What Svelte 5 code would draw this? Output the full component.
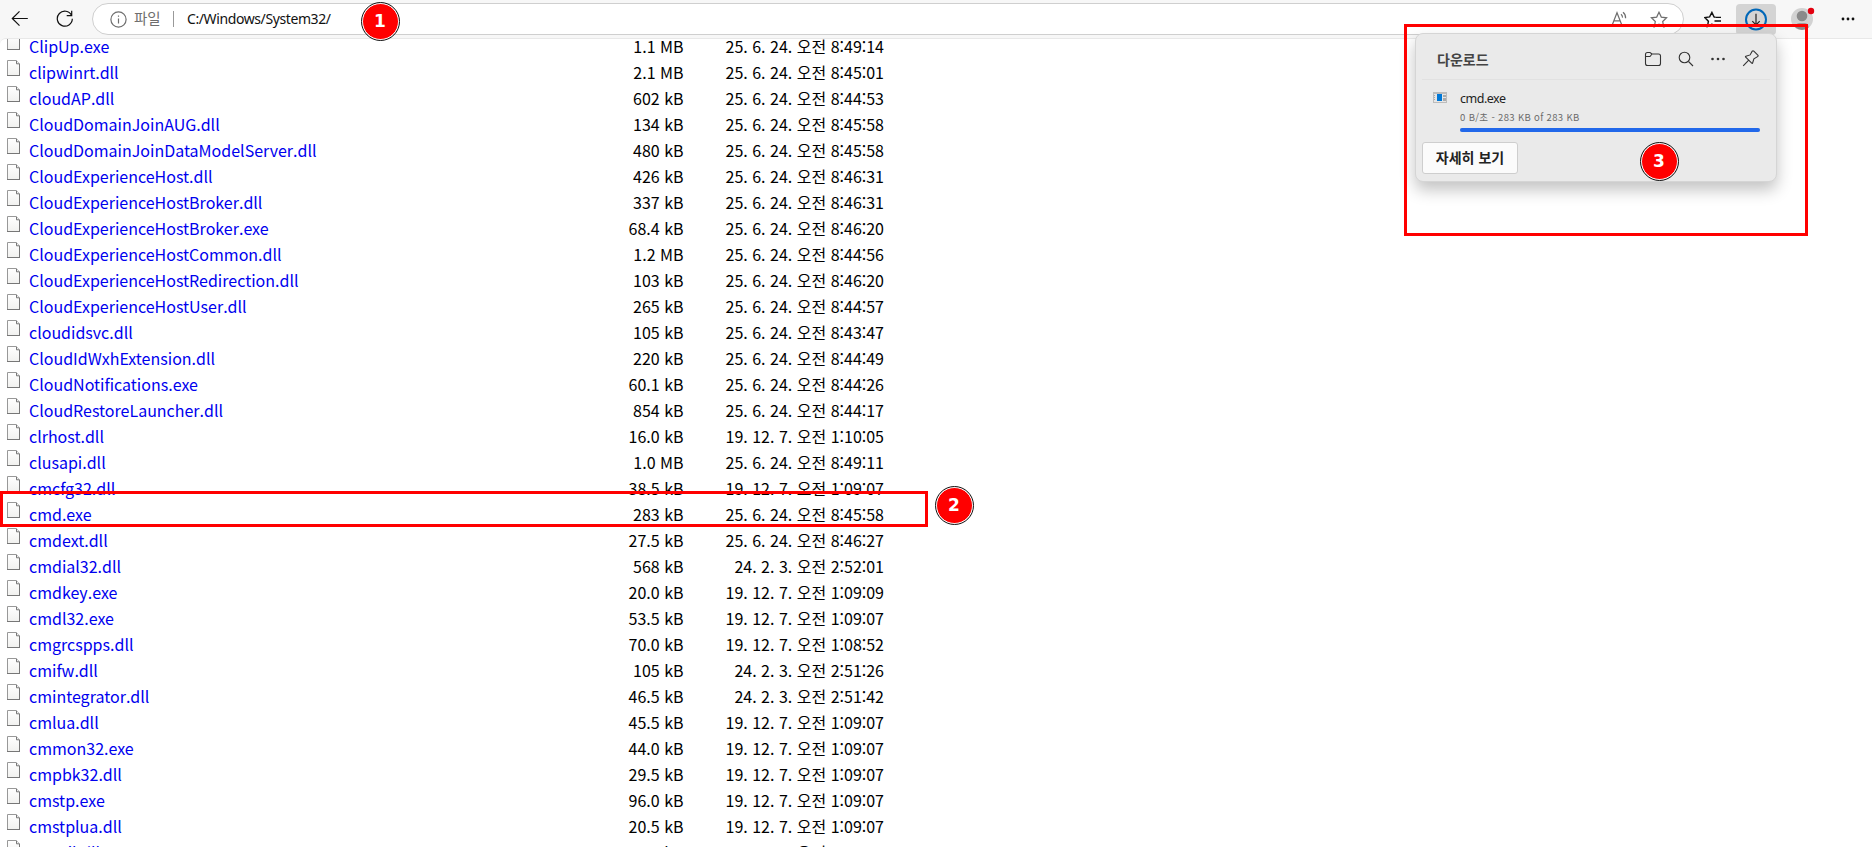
<script lang="ts">
	interface Entry {
		name: string;
		size: string;
		date: string;
	}

	const entries: Entry[] = [
		{ name: 'ClipUp.exe', size: '1.1 MB', date: '25. 6. 24. 오전 8:49:14' },
		{ name: 'clipwinrt.dll', size: '2.1 MB', date: '25. 6. 24. 오전 8:45:01' },
		{ name: 'cloudAP.dll', size: '602 kB', date: '25. 6. 24. 오전 8:44:53' },
		{ name: 'CloudDomainJoinAUG.dll', size: '134 kB', date: '25. 6. 24. 오전 8:45:58' },
		{ name: 'CloudDomainJoinDataModelServer.dll', size: '480 kB', date: '25. 6. 24. 오전 8:45:58' },
		{ name: 'CloudExperienceHost.dll', size: '426 kB', date: '25. 6. 24. 오전 8:46:31' },
		{ name: 'CloudExperienceHostBroker.dll', size: '337 kB', date: '25. 6. 24. 오전 8:46:31' },
		{ name: 'CloudExperienceHostBroker.exe', size: '68.4 kB', date: '25. 6. 24. 오전 8:46:20' },
		{ name: 'CloudExperienceHostCommon.dll', size: '1.2 MB', date: '25. 6. 24. 오전 8:44:56' },
		{ name: 'CloudExperienceHostRedirection.dll', size: '103 kB', date: '25. 6. 24. 오전 8:46:20' },
		{ name: 'CloudExperienceHostUser.dll', size: '265 kB', date: '25. 6. 24. 오전 8:44:57' },
		{ name: 'cloudidsvc.dll', size: '105 kB', date: '25. 6. 24. 오전 8:43:47' },
		{ name: 'CloudIdWxhExtension.dll', size: '220 kB', date: '25. 6. 24. 오전 8:44:49' },
		{ name: 'CloudNotifications.exe', size: '60.1 kB', date: '25. 6. 24. 오전 8:44:26' },
		{ name: 'CloudRestoreLauncher.dll', size: '854 kB', date: '25. 6. 24. 오전 8:44:17' },
		{ name: 'clrhost.dll', size: '16.0 kB', date: '19. 12. 7. 오전 1:10:05' },
		{ name: 'clusapi.dll', size: '1.0 MB', date: '25. 6. 24. 오전 8:49:11' },
		{ name: 'cmcfg32.dll', size: '38.5 kB', date: '19. 12. 7. 오전 1:09:07' },
		{ name: 'cmd.exe', size: '283 kB', date: '25. 6. 24. 오전 8:45:58' },
		{ name: 'cmdext.dll', size: '27.5 kB', date: '25. 6. 24. 오전 8:46:27' },
		{ name: 'cmdial32.dll', size: '568 kB', date: '24. 2. 3. 오전 2:52:01' },
		{ name: 'cmdkey.exe', size: '20.0 kB', date: '19. 12. 7. 오전 1:09:09' },
		{ name: 'cmdl32.exe', size: '53.5 kB', date: '19. 12. 7. 오전 1:09:07' },
		{ name: 'cmgrcspps.dll', size: '70.0 kB', date: '19. 12. 7. 오전 1:08:52' },
		{ name: 'cmifw.dll', size: '105 kB', date: '24. 2. 3. 오전 2:51:26' },
		{ name: 'cmintegrator.dll', size: '46.5 kB', date: '24. 2. 3. 오전 2:51:42' },
		{ name: 'cmlua.dll', size: '45.5 kB', date: '19. 12. 7. 오전 1:09:07' },
		{ name: 'cmmon32.exe', size: '44.0 kB', date: '19. 12. 7. 오전 1:09:07' },
		{ name: 'cmpbk32.dll', size: '29.5 kB', date: '19. 12. 7. 오전 1:09:07' },
		{ name: 'cmstp.exe', size: '96.0 kB', date: '19. 12. 7. 오전 1:09:07' },
		{ name: 'cmstplua.dll', size: '20.5 kB', date: '19. 12. 7. 오전 1:09:07' },
		{ name: 'cmutil.dll', size: '56.5 kB', date: '19. 12. 7. 오전 1:09:07' }
	];

	let progress = $state(100);
</script>

<div class="browser" lang="ko">
	<header class="toolbar">
		<button class="nav back" aria-label="뒤로">
			<svg width="18" height="18" viewBox="0 0 18 18"><path d="M16.800 8.500H1.500M8.500 1.300 1.300 8.500l7.200 7.200" /></svg>
		</button>
		<button class="nav reload" aria-label="새로 고침">
			<svg width="18" height="18" viewBox="0 0 18 18">
				<path d="M15.600 5.500A7.500 7.500 0 1 0 16.300 8.700M15.700 .7v5h-5" />
			</svg>
		</button>
		<div class="address">
			<svg class="info" width="17" height="17" viewBox="0 0 17 17">
				<circle cx="8.500" cy="8.500" r="7.600" />
				<path d="M8.500 7.500v5M8.500 4.400v1.400" />
			</svg>
			<span class="scheme">파일</span>
			<span class="divider"></span>
			<span class="url">C:/Windows/System32/</span>
			<svg class="read" width="17" height="16" viewBox="0 0 17 16">
				<path d="M1.200 14 6 1.700l4.800 12.300M2.900 9.800h6.200M10 3.200q1.600 1.300 1.500 3.400M12 1.200q2.800 2.200 2.600 6" />
			</svg>
			<svg class="star" width="18" height="17" viewBox="0 0 18 17">
				<path d="m9 1.200 2.300 4.900 5.300.7-3.900 3.700 1 5.400L9 13.300l-4.700 2.600 1-5.400L1.400 6.800l5.300-.7z" />
			</svg>
		</div>
		<button class="nav favorites" aria-label="즐겨찾기">
			<svg width="18" height="17" viewBox="0 0 18 17">
				<path d="M11.300 6.200 10 5.900 7.900 1.400 5.600 5.900.9 6.600l3.500 3.600-.9 5.300 5-2.700M11.500 6.400h5.500M10.500 10h6.500M11.500 13.600h5.500" />
			</svg>
		</button>
		<button class="nav downloads" aria-label="다운로드">
			<svg width="24" height="24" viewBox="0 0 24 24">
				<circle cx="12" cy="11.500" r="10" />
				<path d="M12 5.800v11M8.300 13.100l3.700 3.700 3.700-3.700" />
			</svg>
		</button>
		<button class="nav profile" aria-label="프로필">
			<svg width="26" height="26" viewBox="0 0 26 26">
				<circle cx="12" cy="13" r="11" fill="#d2d2d2" />
				<circle cx="12" cy="10" r="5.300" fill="#8a8a8a" />
				<path d="M5.500 21.800v-.8q0-3.800 4-3.800h5q4 0 4 3.800v.8a11 11 0 0 1-13 0z" fill="#8a8a8a" />
				<circle cx="21" cy="5" r="3.200" fill="#e3000f" />
			</svg>
		</button>
		<button class="nav more" aria-label="설정 및 기타">
			<svg width="14" height="4" viewBox="0 0 14 4">
				<circle cx="2" cy="2" r="1.400" /><circle cx="7" cy="2" r="1.400" /><circle cx="12" cy="2" r="1.400" />
			</svg>
		</button>
	</header>

	<main class="page">
		<div class="listing">
			{#each entries as entry (entry.name)}
				<div class="row">
					<svg class="file" width="13" height="16" viewBox="0 0 13 16">
						<defs>
							<linearGradient id="paper" x1="0" y1="0" x2="0" y2="1">
								<stop offset="0" stop-color="#fff" />
								<stop offset="1" stop-color="#f1f1ef" />
							</linearGradient>
						</defs>
						<path d="M.5.5h8.700l3.300 3.300v11.700H.5z" fill="url(#paper)" stroke="#989898" />
						<path d="M0 15.500h13M12.500 4v12" stroke="#777" />
						<path d="M9.500.8v3h3" fill="#eee" stroke="#777" />
					</svg>
					<a href="#{entry.name}">{entry.name}</a>
					<span class="size">{entry.size}</span>
					<span class="date">{entry.date}</span>
				</div>
			{/each}
		</div>
	</main>

	<section class="popup">
		<div class="popup-header">
			<h2>다운로드</h2>
			<svg width="18" height="16" viewBox="0 0 18 16">
				<path d="M1.500 12.500v-9q0-2 2-2h2.500l2 1.500h6.500q2 0 2 2v7.500q0 2-2 2h-11q-2 0-2-2zM1.500 5.500h4.500L8 3" />
			</svg>
			<svg width="16" height="16" viewBox="0 0 16 16">
				<circle cx="6.500" cy="6.500" r="5.300" /><path d="m10.500 10.500 4.500 4.500" />
			</svg>
			<svg class="dots" width="16" height="16" viewBox="0 0 16 16">
				<circle cx="2.500" cy="8" r="1.300" /><circle cx="8" cy="8" r="1.300" /><circle cx="13.500" cy="8" r="1.300" />
			</svg>
			<svg width="17" height="17" viewBox="0 0 17 17">
				<path d="M10.200 1.200q.8-.8 1.600 0l4 4q.8.8-.2 1.400l-3.700 2.200-1.300 4.200q-.3.800-.9.200L3.700 7.200q-.6-.6.200-.9l4.200-1.400zM6.500 10.300l-5.300 5.500" />
			</svg>
		</div>
		<div class="item">
			<svg class="app" width="14" height="11" viewBox="0 0 14 11">
				<path d="M0 0h14v11H0z" fill="#bcbcbc" />
				<path d="M1 2h12v8H1z" fill="#e6e6e6" />
				<path d="M4 2h5v7H4z" fill="#0078d7" />
				<path d="M10 3h3v2h-3zM10 6h3v3h-3zM1 3h1v1H1zM1 5h1v1H1zM1 7h1v1H1z" fill="#aaa" />
			</svg>
			<div class="details">
				<div class="filename">cmd.exe</div>
				<div class="status">0 B/초 - 283 KB of 283 KB</div>
				<div class="track"><div class="bar" style="width: {progress}%"></div></div>
			</div>
		</div>
		<button class="see-more">자세히 보기</button>
	</section>

	<div class="outline row-outline"></div>
	<div class="outline popup-outline"></div>
	<span class="step one">1</span>
	<span class="step two">2</span>
	<span class="step three">3</span>
</div>

<style>
	:global(body) {
		margin: 0;
		overflow: hidden;
	}
	.browser {
		position: relative;
		display: flex;
		flex-direction: column;
		height: 847px;
		overflow: hidden;
		background: #f7f7f7;
		font-family: 'Noto Sans CJK KR', sans-serif;
	}
	button {
		font-family: inherit;
		padding: 0;
		border: 0;
		background: none;
	}
	svg {
		display: block;
		flex: none;
		fill: none;
		stroke: #222;
		stroke-width: 1.2;
	}
	.toolbar {
		display: flex;
		height: 38px;
		flex: none;
		box-sizing: border-box;
		padding: 3px 0 0 11px;
	}
	.nav {
		display: flex;
		align-items: center;
		justify-content: center;
		height: 32px;
		flex: none;
	}
	.back {
		width: 18px;
	}
	.reload {
		width: 18px;
		margin: 0 18px 0 27px;
	}
	.back svg,
	.reload svg {
		stroke: #111;
		stroke-width: 1.2;
	}
	.address {
		display: flex;
		align-items: center;
		box-sizing: border-box;
		width: 1592px;
		height: 32px;
		padding: 0 15px 0 17px;
		border: 1px solid #cfcfcf;
		border-radius: 16px;
		background: #fff;
		font-size: 14px;
	}
	.address svg {
		stroke: #6e6e6e;
	}
	.scheme {
		width: 39px;
		margin-left: 7px;
		color: #6e6e6e;
		font-size: 14.5px;
		line-height: 28px;
		height: 30px;
	}
	.divider {
		width: 1px;
		height: 16px;
		background: #999;
	}
	.url {
		flex: 1;
		margin-left: 13px;
		color: #111;
		font-family: 'Noto Sans', sans-serif;
		font-size: 14px;
		letter-spacing: -0.4px;
		line-height: 30px;
	}
	.star {
		margin-left: 22px;
	}
	.favorites {
		width: 18px;
		margin-left: 20px;
	}
	.favorites svg {
		stroke: #111;
		stroke-width: 1.4;
	}
	.downloads {
		width: 40px;
		height: 31px;
		margin: 1px 0 0 14px;
		border-radius: 4px;
		background: #d4d4d4;
	}
	.downloads circle {
		stroke: #0067b8;
		stroke-width: 2;
	}
	.profile {
		width: 26px;
		margin-left: 14px;
	}
	.profile svg,
	.more svg {
		stroke: none;
	}
	.more {
		width: 14px;
		margin-left: 25px;
	}
	.more svg {
		fill: #111;
	}
	.page {
		flex: 1;
		min-height: 0;
		overflow: hidden;
		border-top: 1px solid #e8e8e8;
		border-radius: 6px 0 0 0;
		background: #fff;
	}
	.listing {
		margin-top: -6px;
	}
	.row {
		display: flex;
		height: 26px;
		padding-left: 7px;
		font-size: 16px;
		line-height: 26px;
		white-space: nowrap;
		color: #000;
	}
	.file {
		margin: 1px 9px 0 0;
		stroke-width: 1;
	}
	.row a {
		width: 534px;
		color: #0000ee;
		text-decoration: none;
	}
	.size {
		width: 120.5px;
		text-align: right;
	}
	.date {
		width: 200.5px;
		text-align: right;
	}
	.popup {
		position: absolute;
		top: 33px;
		left: 1415px;
		box-sizing: border-box;
		width: 362px;
		height: 149px;
		padding: 0 6px;
		border: 1px solid #d5d5d5;
		border-radius: 8px;
		background: #eaeaea;
		box-shadow: 0 8px 16px rgba(0, 0, 0, 0.24);
	}
	.popup-header {
		display: flex;
		align-items: center;
		gap: 16px;
		height: 46px;
		padding: 4px 11px 0 15px;
		box-sizing: border-box;
		border-bottom: 1px solid #e1e1e1;
	}
	.popup-header h2 {
		flex: 1;
		margin: 0;
		color: #444;
		font-size: 14px;
		font-weight: 600;
		line-height: 20px;
	}
	.popup-header svg {
		stroke: #333;
		stroke-width: 1.1;
	}
	.popup-header .dots {
		fill: #333;
		stroke: none;
	}
	.item {
		display: flex;
		padding: 12px 10px 0 11px;
	}
	.app {
		margin: 0 13px 0 0;
		stroke: none;
	}
	.details {
		flex: 1;
	}
	.filename {
		height: 15px;
		color: #222;
		font-family: 'Noto Sans', sans-serif;
		font-size: 12.5px;
		letter-spacing: -0.5px;
		line-height: 14px;
	}
	.status {
		height: 20px;
		color: #6a6a6a;
		font-size: 9.5px;
		letter-spacing: 0.35px;
		line-height: 21px;
		white-space: nowrap;
	}
	.track {
		height: 4px;
		margin-top: 1px;
		border-radius: 2px;
		background: #ccc;
	}
	.bar {
		height: 4px;
		border-radius: 2px;
		background: #2268ea;
	}
	.see-more {
		display: block;
		box-sizing: border-box;
		width: 96px;
		height: 32px;
		margin-top: 10px;
		padding-bottom: 2px;
		border: 1px solid #cecece;
		border-radius: 3px;
		background: #fbfbfb;
		color: #222;
		font-size: 14px;
		font-weight: 600;
		line-height: 28px;
	}
	.outline {
		position: absolute;
		box-sizing: border-box;
		border: 3px solid #f00;
	}
	.row-outline {
		top: 491px;
		left: 0;
		width: 928px;
		height: 36px;
	}
	.popup-outline {
		top: 24px;
		left: 1404px;
		width: 404px;
		height: 212px;
	}
	.step {
		position: absolute;
		box-sizing: border-box;
		width: 37px;
		height: 37px;
		border: 1px solid #fff;
		border-radius: 50%;
		outline: 1px solid #111;
		background: #f00;
		color: #fff;
		font: bold 17px/34px 'DejaVu Sans', sans-serif;
		text-align: center;
	}
	.one {
		top: 2.5px;
		left: 361.5px;
	}
	.two {
		top: 487px;
		left: 935.5px;
	}
	.three {
		top: 143px;
		left: 1640.5px;
	}
</style>
